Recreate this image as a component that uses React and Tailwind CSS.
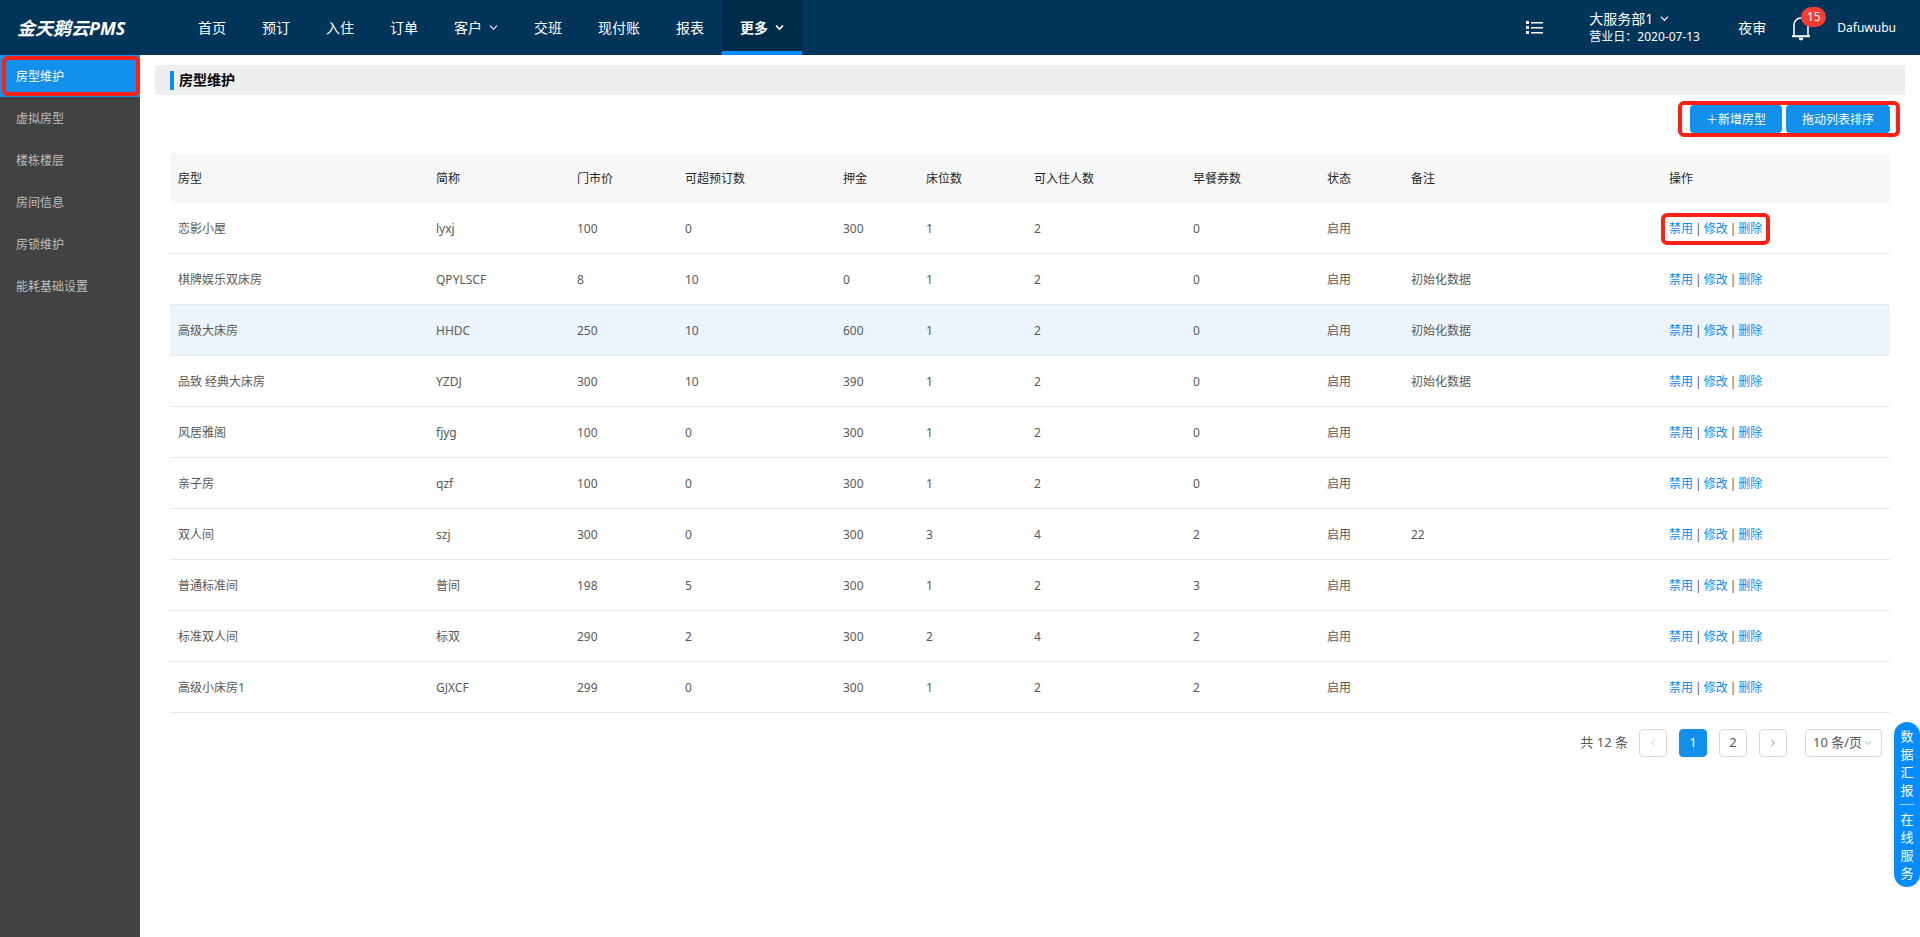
import React, { useState } from 'react';

const navItems = [
  { label: '首页' },
  { label: '预订' },
  { label: '入住' },
  { label: '订单' },
  { label: '客户', arrow: true },
  { label: '交班' },
  { label: '现付账' },
  { label: '报表' },
  { label: '更多', arrow: true, active: true },
];

const sideItems = ['房型维护', '虚拟房型', '楼栋楼层', '房间信息', '房锁维护', '能耗基础设置'];

const columns = [
  { title: '房型', width: 'w-[258px]' },
  { title: '简称', width: 'w-[141px]' },
  { title: '门市价', width: 'w-[108px]' },
  { title: '可超预订数', width: 'w-[158px]' },
  { title: '押金', width: 'w-[83px]' },
  { title: '床位数', width: 'w-[108px]' },
  { title: '可入住人数', width: 'w-[159px]' },
  { title: '早餐券数', width: 'w-[134px]' },
  { title: '状态', width: 'w-[84px]' },
  { title: '备注', width: 'w-[258px]' },
  { title: '操作', width: 'w-[229px]' },
];

const rooms = [
  ['恋影小屋', 'lyxj', 100, 0, 300, 1, 2, 0, '启用', ''],
  ['棋牌娱乐双床房', 'QPYLSCF', 8, 10, 0, 1, 2, 0, '启用', '初始化数据'],
  ['高级大床房', 'HHDC', 250, 10, 600, 1, 2, 0, '启用', '初始化数据'],
  ['品致 经典大床房', 'YZDJ', 300, 10, 390, 1, 2, 0, '启用', '初始化数据'],
  ['风居雅阁', 'fjyg', 100, 0, 300, 1, 2, 0, '启用', ''],
  ['亲子房', 'qzf', 100, 0, 300, 1, 2, 0, '启用', ''],
  ['双人间', 'szj', 300, 0, 300, 3, 4, 2, '启用', '22'],
  ['普通标准间', '普间', 198, 5, 300, 1, 2, 3, '启用', ''],
  ['标准双人间', '标双', 290, 2, 300, 2, 4, 2, '启用', ''],
  ['高级小床房1', 'GJXCF', 299, 0, 300, 1, 2, 2, '启用', ''],
];

const Chevron = ({ className, strokeWidth = 1.3 }) => (
  <svg viewBox="0 0 10 10" className={className} fill="none" stroke="currentColor" strokeWidth={strokeWidth}>
    <path d="M1.2 2.8 5 7l3.8-4.2" />
  </svg>
);

const ListIcon = () => (
  <svg viewBox="0 0 18 14" className="h-[14px] w-[18px]" fill="currentColor">
    <path d="M0 0h3v3H0zM0 5h3v3H0zM0 10h3v3H0zM5 1h12v1.400H5zM5 6h12v1.400H5zM5 11h12v1.400H5z" />
  </svg>
);

const BellIcon = () => (
  <svg viewBox="0 0 20 26" className="h-[26px] w-5" fill="none" stroke="currentColor" strokeWidth="1.6">
    <path d="M3 21V10.500C3 6 6 3 10 3s7 3 7 7.500V21" />
    <path d="M1 21.200h18" strokeWidth="2" />
    <path d="M8 23h4a2 2 0 0 1-4 0z" fill="currentColor" strokeWidth="0.800" />
  </svg>
);

// Red outline laid over a highlighted control
const Mark = ({ className }) => (
  <span className={`pointer-events-none absolute rounded-md border-4 border-[#ff2015] ${className}`} />
);

const Header = () => (
  <header className="flex h-[55px] bg-[#003459] text-white">
    <div className="flex w-[180px] shrink-0 items-center pl-[17px] text-lg font-bold italic">金天鹅云PMS</div>
    <nav className="flex text-sm">
      {navItems.map((item) => (
        <a
          key={item.label}
          href="#"
          className={`flex items-center gap-[7px] px-[18px] ${
            item.active ? 'border-b-4 border-[#0a8cff] bg-[#002c4a] pt-1 font-bold' : ''
          }`}
        >
          {item.label}
          {item.arrow && <Chevron className="h-[9px] w-[9px]" strokeWidth={item.active ? 1.9 : 1.2} />}
        </a>
      ))}
    </nav>
    <div className="ml-auto flex items-center pr-6">
      <button aria-label="菜单" className="mr-[45px]">
        <ListIcon />
      </button>
      <div className="mr-[34px] w-[115px] leading-[18px] whitespace-nowrap">
        <button className="flex items-center gap-[7px] text-sm leading-[18px]">
          大服务部1
          <Chevron className="h-[9px] w-[9px]" />
        </button>
        <p className="text-xs leading-[18px]">营业日：2020-07-13</p>
      </div>
      <a href="#" className="mr-[25px] text-sm">
        夜审
      </a>
      <button aria-label="通知" className="relative mr-[26px]">
        <BellIcon />
        <span className="absolute -top-2 left-[10px] flex h-5 w-[25px] items-center justify-center rounded-full bg-[#f33e31] text-xs">
          15
        </span>
      </button>
      <a href="#" className="text-xs">
        Dafuwubu
      </a>
    </div>
  </header>
);

const Sidebar = () => (
  <aside className="w-[140px] shrink-0 bg-[#424242] text-xs text-[#bfbfbf]">
    {sideItems.map((label, index) => (
      <a
        key={label}
        href="#"
        className={`relative flex h-[42px] items-center pt-0.5 pl-4 ${index === 0 ? 'bg-[#138fec] text-white' : ''}`}
      >
        {label}
        {index === 0 && <Mark className="inset-x-0 inset-y-px ml-[2px]" />}
      </a>
    ))}
  </aside>
);

const RoomTable = () => (
  <table className="mt-5 w-full table-fixed border-separate border-spacing-0 text-left text-xs text-[#595959]">
    <thead>
      <tr className="h-[50px] text-[#262626]">
        {columns.map((col) => (
          <th
            key={col.title}
            className={`bg-[#f7f7f7] px-2 pt-0.5 font-normal first:rounded-tl last:rounded-tr ${col.width}`}
          >
            {col.title}
          </th>
        ))}
      </tr>
    </thead>
    <tbody>
      {rooms.map((room, index) => (
        <tr key={room[0]} className={`h-[51px] ${index === 2 ? 'bg-[#ecf5fd]' : ''}`}>
          {room.map((cell, i) => (
            <td key={i} className="border-b border-[#e8e8e8] px-2 pt-0.5">
              {cell}
            </td>
          ))}
          <td className="border-b border-[#e8e8e8] px-2 pt-0.5">
            <span className="relative inline-flex gap-0.5">
              <a href="#" className="text-[#0b8af5]">禁用</a>
              <span>|</span>
              <a href="#" className="text-[#0b8af5]">修改</a>
              <span>|</span>
              <a href="#" className="text-[#0b8af5]">删除</a>
              {index === 0 && <Mark className="-inset-x-2 -inset-y-2" />}
            </span>
          </td>
        </tr>
      ))}
    </tbody>
  </table>
);

const Pagination = () => {
  const [page, setPage] = useState(1);
  const box = 'flex h-7 w-7 items-center justify-center rounded border';

  return (
    <div className="mt-4 flex items-center justify-end pr-2 text-[13px] text-[#595959]">
      <span className="mr-[11px]">共 12 条</span>
      <div className="flex gap-3">
        <button
          aria-label="上一页"
          disabled={page === 1}
          onClick={() => setPage(1)}
          className={`${box} border-[#d9d9d9] text-[#c4c4c4]`}
        >
          <Chevron className="h-2 w-2 rotate-90" strokeWidth={1} />
        </button>
        {[1, 2].map((n) => (
          <button
            key={n}
            onClick={() => setPage(n)}
            className={`${box} ${n === page ? 'border-[#138fec] bg-[#138fec] text-white' : 'border-[#d9d9d9]'}`}
          >
            {n}
          </button>
        ))}
        <button aria-label="下一页" onClick={() => setPage(2)} className={`${box} border-[#d9d9d9] text-[#8c8c8c]`}>
          <Chevron className="h-2 w-2 -rotate-90" strokeWidth={1.2} />
        </button>
      </div>
      <div className="relative ml-[18px]">
        <select
          aria-label="每页条数"
          className="h-7 w-[77px] appearance-none rounded border border-[#d9d9d9] bg-white pl-[7px]"
        >
          <option>10 条/页</option>
          <option>20 条/页</option>
        </select>
        <Chevron className="pointer-events-none absolute top-[10px] right-[10px] h-2 w-2 text-[#a0a0a0]" strokeWidth={1} />
      </div>
    </div>
  );
};

const FloatingTabs = () => (
  <div className="fixed right-0 bottom-[50px] flex w-[26px] flex-col items-center rounded-full bg-[#058cff] py-[5px] text-[13px] leading-[18px] text-white">
    <button className="w-[13px] break-all">数据汇报</button>
    <span className="my-[5px] h-px w-[14px] bg-[#9bd1ff]" />
    <button className="w-[13px] break-all">在线服务</button>
  </div>
);

const App = () => {
  return (
    <div className="flex min-h-screen flex-col bg-white font-['Noto_Sans','Noto_Sans_CJK_SC',sans-serif]">
      <Header />
      <div className="flex flex-1">
        <Sidebar />
        <main className="min-w-0 flex-1 px-[15px] pt-[10px]">
          {/* Title */}
          <div className="flex h-[30px] items-center bg-[#eeeeee] pl-[15px]">
            <h1 className="border-l-4 border-[#058cff] pb-0.5 pl-[5px] text-sm leading-[17px] font-bold text-black">
              房型维护
            </h1>
          </div>

          <div className="px-[15px] pt-[10px]">
            {/* Actions */}
            <div className="flex justify-end">
              <div className="relative flex gap-1 text-xs text-white">
                <button className="h-7 w-[92px] rounded bg-[#138fec] pt-0.5">＋新增房型</button>
                <button className="h-7 w-[104px] rounded bg-[#138fec] pt-0.5">拖动列表排序</button>
                <Mark className="-inset-y-1 -right-[10px] -left-3" />
              </div>
            </div>
            <RoomTable />
            <Pagination />
          </div>
        </main>
      </div>
      <FloatingTabs />
    </div>
  );
};

export default App;
